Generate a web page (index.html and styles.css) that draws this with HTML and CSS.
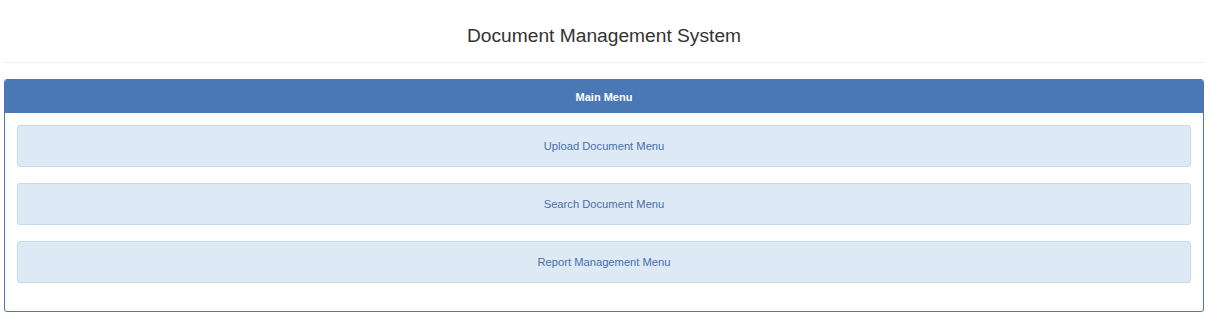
FILE: index.html
```html
<!DOCTYPE html>
<html>
<head>
<meta charset="utf-8">
<link rel="stylesheet" href="styles.css">
</head>
<body>
<div class="page">
  <header class="page-header">
    <h1 class="title">Document Management System</h1>
  </header>
  <section class="panel">
    <div class="panel-heading">Main Menu</div>
    <div class="panel-body">
      <a class="menu-item" href="#">Upload Document Menu</a>
      <a class="menu-item" href="#">Search Document Menu</a>
      <a class="menu-item" href="#">Report Management Menu</a>
    </div>
  </section>
</div>
</body>
</html>
```
FILE: styles.css
```css
html, body {
  margin: 0;
  padding: 0;
  background: #fff;
  font-family: "Liberation Sans", Arial, sans-serif;
}
.page {
  margin: 0 9px 0 4px;
}
.page-header {
  height: 63px;
  border-bottom: 1px solid #eeeeee;
  display: flex;
  align-items: center;
  justify-content: center;
  box-sizing: border-box;
  padding-top: 10px;
}
.title {
  margin: 0;
  font-size: 19.2px;
  font-weight: normal;
  color: #333333;
}
.panel {
  margin-top: 16px;
  border: 1px solid #4a78b5;
  border-radius: 3px;
  overflow: hidden;
}
.panel-heading {
  background: #4a78b5;
  color: #ffffff;
  font-weight: bold;
  font-size: 11px;
  height: 33px;
  display: flex;
  align-items: center;
  justify-content: center;
}
.panel-body {
  padding: 12px 12px 28px 12px;
  display: flex;
  flex-direction: column;
  gap: 16px;
}
.menu-item {
  display: flex;
  align-items: center;
  justify-content: center;
  height: 42px;
  box-sizing: border-box;
  background: #ddeaf6;
  border: 1px solid #c6dbed;
  border-radius: 3px;
  color: #4a6ea8;
  font-size: 11.2px;
  text-decoration: none;
}
```
